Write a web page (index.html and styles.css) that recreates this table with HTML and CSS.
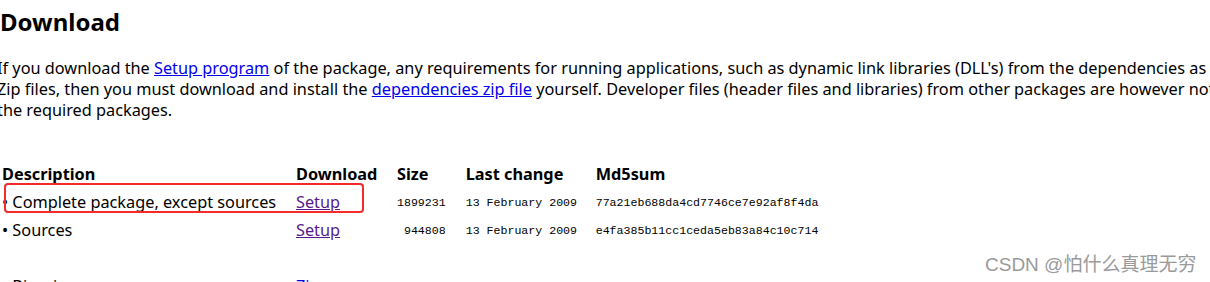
FILE: index.html
```html
<!DOCTYPE html>
<html lang="en">
<head>
  <meta charset="UTF-8">
  <title>Download</title>
  <link rel="stylesheet" href="styles.css">
</head>
<body>
  <div class="page">
    <h2 class="h2">Download</h2>
    <p class="p">
      If you download the <a href="#" class="link">Setup program</a> of the package, any requirements for running applications, such as dynamic link libraries (DLL's) from the dependencies as<br>
      Zip files, then you must download and install the <a href="#" class="link">dependencies zip file</a> yourself. Developer files (header files and libraries) from other packages are however not<br>
      the required packages.
    </p>
    <table class="table">
      <tr>
        <th class="th desc">Description</th>
        <th class="th dl">Download</th>
        <th class="th size">Size</th>
        <th class="th date">Last change</th>
        <th class="th md5">Md5sum</th>
      </tr>
      <tr>
        <td class="td">&bull; Complete package, except sources</td>
        <td class="td"><a href="#" class="visited">Setup</a></td>
        <td class="td mono num">1899231</td>
        <td class="td mono">13 February 2009</td>
        <td class="td mono">77a21eb688da4cd7746ce7e92af8f4da</td>
      </tr>
      <tr>
        <td class="td">&bull; Sources</td>
        <td class="td"><a href="#" class="visited">Setup</a></td>
        <td class="td mono num">944808</td>
        <td class="td mono">13 February 2009</td>
        <td class="td mono">e4fa385b11cc1ceda5eb83a84c10c714</td>
      </tr>
      <tr><td class="td" colspan="5"></td></tr>
      <tr>
        <td class="td">&bull; Binaries</td>
        <td class="td"><a href="#" class="link">Zip</a></td>
        <td class="td mono num">451061</td>
        <td class="td mono">13 February 2009</td>
        <td class="td mono">a1523d4fe3da41ce45063b4e493a3c01</td>
      </tr>
    </table>
  </div>
  <div class="mark"></div>
  <div class="water">CSDN @怕什么真理无穷</div>
</body>
</html>
```

FILE: styles.css
```css
html, body {
  margin: 0;
  padding: 0;
  background: #fff;
  overflow: hidden;
}
body {
  width: 1210px;
  height: 282px;
  position: relative;
  font-family: "Noto Sans", "Open Sans", sans-serif;
  color: #000;
}
.page {
  margin-left: -3px;
  white-space: nowrap;
}
.h2 {
  font-size: 24px;
  font-weight: bold;
  margin: 0;
  padding: 5px 0 0 3px;
  line-height: 34px;
}
.p {
  font-size: 16.3px;
  line-height: 21px;
  margin: 19px 0 0 0;
}
.link {
  color: #0000ee;
}
.visited {
  color: #551a8b;
}
.table {
  margin-top: 39px;
  margin-left: 5px;
  border-collapse: collapse;
  font-size: 16.3px;
}
.th {
  text-align: left;
  font-weight: bold;
  padding: 0;
  height: 28px;
}
.td {
  padding: 0;
  height: 28px;
}
.desc { width: 294px; }
.dl { width: 101px; }
.size { width: 68px; }
.date { width: 130px; }
.mono {
  font-family: "Liberation Mono", monospace;
  font-size: 11.6px;
}
.num {
  text-align: right;
  padding-right: 20px;
}
.mark {
  position: absolute;
  left: 4px;
  top: 183px;
  width: 356px;
  height: 26px;
  border: 2px solid #f52a2a;
  border-radius: 4px;
}
.water {
  position: absolute;
  left: 985px;
  top: 249px;
  font-size: 19px;
  color: #9a9a9a;
  font-family: "Liberation Sans", "Noto Sans CJK SC", sans-serif;
  text-shadow: 0 0 1px #fff;
}
```
